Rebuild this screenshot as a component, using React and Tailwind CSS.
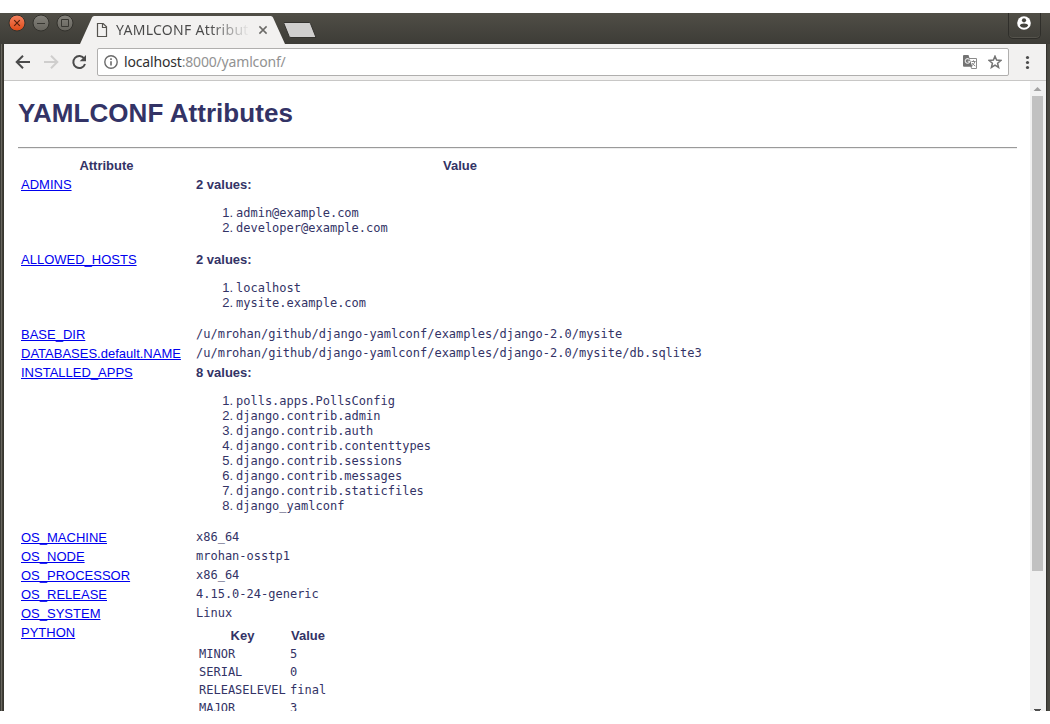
import React from "react";

const mono = "font-['DejaVu_Sans_Mono',monospace] text-[12px]";

const rows = [
  { name: "ADMINS", list: ["admin@example.com", "developer@example.com"] },
  { name: "ALLOWED_HOSTS", list: ["localhost", "mysite.example.com"] },
  { name: "BASE_DIR", value: "/u/mrohan/github/django-yamlconf/examples/django-2.0/mysite" },
  { name: "DATABASES.default.NAME", value: "/u/mrohan/github/django-yamlconf/examples/django-2.0/mysite/db.sqlite3" },
  {
    name: "INSTALLED_APPS",
    list: [
      "polls.apps.PollsConfig",
      "django.contrib.admin",
      "django.contrib.auth",
      "django.contrib.contenttypes",
      "django.contrib.sessions",
      "django.contrib.messages",
      "django.contrib.staticfiles",
      "django_yamlconf",
    ],
  },
  { name: "OS_MACHINE", value: "x86_64" },
  { name: "OS_NODE", value: "mrohan-osstp1" },
  { name: "OS_PROCESSOR", value: "x86_64" },
  { name: "OS_RELEASE", value: "4.15.0-24-generic" },
  { name: "OS_SYSTEM", value: "Linux" },
  {
    name: "PYTHON",
    table: [["MINOR", "5"], ["SERIAL", "0"], ["RELEASELEVEL", "final"], ["MAJOR", "3"]],
  },
];

function WindowButtons() {
  return (
    <svg width="76" height="20" viewBox="0 0 76 20" className="ml-1 shrink-0" fill="none">
      <defs>
        <linearGradient id="close" x1="0" y1="0" x2="0" y2="1">
          <stop offset="0" stopColor="#f58462" />
          <stop offset="1" stopColor="#dd4814" />
        </linearGradient>
        <linearGradient id="plain" x1="0" y1="0" x2="0" y2="1">
          <stop offset="0" stopColor="#85837c" />
          <stop offset="1" stopColor="#65635c" />
        </linearGradient>
      </defs>
      <circle cx="13" cy="10" r="8" fill="url(#close)" stroke="#33322d" />
      <path d="M10.2 7.2l5.6 5.6M15.8 7.2l-5.6 5.6" stroke="#55200c" strokeWidth="1.2" />
      <circle cx="37" cy="10" r="8" fill="url(#plain)" stroke="#33322d" />
      <path d="M33 10.5h8" stroke="#383732" />
      <circle cx="61" cy="10" r="8" fill="url(#plain)" stroke="#33322d" />
      <path d="M57.5 6.5h7v7h-7z" stroke="#383732" />
    </svg>
  );
}

function Tab() {
  return (
    <div className="relative h-[31px] w-[205px] shrink-0">
      <svg width="205" height="31" viewBox="0 0 205 31" className="absolute inset-0">
        <path d="M0 31L12 4.5Q12.6 3 14.2 3H190.8Q192.4 3 193 4.5L205 31z" fill="#f2f1f0" />
        <path d="M17.5 10.5h5.7l3.3 3.3v9.7h-9z M22.5 10.5v4h4" fill="none" stroke="#55534f" strokeWidth="1.2" />
        <path d="M179.4 13.4l7.2 7.2M186.6 13.4l-7.2 7.2" stroke="#6b6a67" strokeWidth="1.5" />
      </svg>
      <div className="relative ml-[36px] mt-[7px] w-[134px] overflow-hidden whitespace-nowrap bg-[linear-gradient(90deg,#484848_70%,#48484800)] bg-clip-text font-['Noto_Sans',sans-serif] text-[14px] leading-[20px] tracking-[0.3px] text-transparent">
        YAMLCONF Attributes
      </div>
    </div>
  );
}

function TitleBar() {
  return (
    <div className="flex h-[31px] shrink-0 bg-linear-to-b from-[#504e46] to-[#3d3c37]">
      <WindowButtons />
      <Tab />
      <svg width="34" height="31" viewBox="0 0 34 31" className="-ml-px shrink-0">
        <path d="M-0.5 9.500H25q1 0 1.500 1L32 24.500H7q-1.300 0-1.800-1z" fill="#d0cfce" stroke="#34332f" />
      </svg>
      <div className="flex-1" />
      <div className="mr-[9px] flex h-[26px] w-[33px] justify-center rounded-b-[5px] border border-t-0 border-[#2f2e2a] pr-[2px] shadow-[inset_0_-1px_0_#55534c]">
        <svg width="14" height="14" viewBox="0 0 14 14" className="mt-[3px]">
          <circle cx="7" cy="7" r="6.800" fill="#fff" />
          <circle cx="7" cy="4.300" r="2.100" fill="#45443e" />
          <path d="M2.800 9.700Q3.300 7.600 7 7.600T11.200 9.700Q9.800 11.800 7 11.800T2.800 9.700z" fill="#45443e" />
        </svg>
      </div>
    </div>
  );
}

function Toolbar() {
  return (
    <div className="flex h-[37px] shrink-0 items-center border-b border-[#c8c7c6] bg-[#f2f1f0]">
      <svg width="93" height="36" viewBox="0 0 93 36" fill="none" className="shrink-0">
        <path d="M26 18H13M19 11.700L12.700 18l6.300 6.300" stroke="#4b4b4b" strokeWidth="2" />
        <path d="M40 18h13M47 11.700L53.300 18L47 24.300" stroke="#cfcecd" strokeWidth="2" />
        <path d="M80.300 14.700A6 6 0 1 0 81 20" stroke="#4b4b4b" strokeWidth="2" />
        <path d="M82 11v6.300h-6.300z" fill="#4b4b4b" />
      </svg>
      <div className="flex h-[28px] flex-1 items-center rounded-[2px] border border-[#b0afae] bg-white">
        <svg width="14" height="14" viewBox="0 0 14 14" className="ml-[6px] shrink-0">
          <circle cx="7" cy="7" r="6.200" fill="none" stroke="#6b6b6b" strokeWidth="1.400" />
          <path d="M7 6.200v4.300M7 3.300v1.700" stroke="#6b6b6b" strokeWidth="1.600" />
        </svg>
        <div className="ml-[6px] whitespace-nowrap font-['Noto_Sans',sans-serif] text-[14px] leading-[20px] tracking-[-0.17px] text-[#929292]">
          <span className="text-[#303030]">localhost</span>:8000/yamlconf/
        </div>
        <div className="flex-1" />
        <svg width="15" height="15" viewBox="0 0 15 15" className="shrink-0">
          <path d="M6 3.500h7.500v10H8.500z" fill="#fff" stroke="#8b8b8b" />
          <path d="M1 0h4.500L9.300 11.800H1q-1 0-1-1V1q0-1 1-1z" fill="#737373" />
          <path d="M6.500 4.700A2.300 2.300 0 1 0 6.800 6.300H4.700" fill="none" stroke="#e5e5e5" strokeWidth="1.100" />
          <path d="M8.500 6.500h4M10.500 5.300v1.200M12 6.500q-.5 2.500-3 4M9.300 8q1 2 3 3" fill="none" stroke="#858585" />
        </svg>
        <svg width="14" height="14" viewBox="0 0 14 14" className="ml-[10px] mr-[6px] shrink-0">
          <path d="M7 1.200L8.600 5.100L12.900 5.500L9.600 8.300L10.600 12.500L7 10.200L3.400 12.500L4.400 8.300L1.100 5.500L5.400 5.100z" fill="none" stroke="#737373" strokeWidth="1.500" />
        </svg>
      </div>
      <svg width="37" height="36" viewBox="0 0 37 36" className="shrink-0" fill="#4b4b4b">
        <circle cx="18.500" cy="13.500" r="1.600" />
        <circle cx="18.500" cy="18.500" r="1.600" />
        <circle cx="18.500" cy="23.500" r="1.600" />
      </svg>
    </div>
  );
}

function Value({ row }) {
  if (row.list) {
    return (
      <div>
        <b className="block">{row.list.length} values:</b>
        <ol className="my-[13px]">
          {row.list.map((item, i) => (
            <li key={item} className="flex h-[15px]">
              <span className="w-[40px] pr-[3px] text-right">{i + 1}.</span>
              <span className={`${mono} leading-[17px]`}>{item}</span>
            </li>
          ))}
        </ol>
      </div>
    );
  }
  if (row.table) {
    return (
      <div className="grid w-max grid-cols-[87px_auto] gap-x-[4px] pl-[3px] pt-[3px]">
        <b className="h-[19px] text-center">Key</b>
        <b className="h-[19px] pl-px">Value</b>
        {row.table.map(([k, v]) => (
          <React.Fragment key={k}>
            <span className={`${mono} h-[18px]`}>{k}</span>
            <span className={`${mono} h-[18px]`}>{v}</span>
          </React.Fragment>
        ))}
      </div>
    );
  }
  return <div className={`${mono} h-[15px]`}>{row.value}</div>;
}

function Page() {
  return (
    <main className="w-[1026px] shrink-0 overflow-hidden pl-[14px] pr-[13px] font-['Liberation_Sans',sans-serif] text-[13px] leading-[15px] text-[#333366]">
      <h1 className="mt-[17px] text-[26px] font-bold leading-[30px] tracking-[0.05px]">YAMLCONF Attributes</h1>
      <hr className="mt-[19px] h-[2px] border-b border-t border-b-[#eeeeee] border-t-[#9a9a9a]" />
      <div className="mt-[9px] flex h-[17px] font-bold">
        <div className="w-[175px] pl-[2px] text-center">Attribute</div>
        <div className="w-[534px] text-center">Value</div>
      </div>
      {rows.map((row) => (
        <div key={row.name} className="grid grid-cols-[175px_1fr] pb-[2px] pl-[3px] pt-[2px]">
          <div>
            <a href="#" className="text-[#0000ee] underline">{row.name}</a>
          </div>
          <Value row={row} />
        </div>
      ))}
    </main>
  );
}

function Scrollbar() {
  return (
    <div className="flex h-full w-[16px] shrink-0 flex-col items-center bg-[#f1f1f1]">
      <svg width="15" height="15" viewBox="0 0 15 15" className="mr-px shrink-0">
        <path d="M7.500 6l4 4h-8z" fill="#a3a3a3" />
      </svg>
      <div className="mr-px h-[475px] w-[11px] shrink-0 bg-[#c1c1c1]" />
      <div className="flex-1" />
      <svg width="7" height="2" viewBox="0 0 7 2" className="mr-px shrink-0">
        <path d="M0 0h7v1H6v1H1V1H0z" fill="#505050" />
      </svg>
    </div>
  );
}

export default function App() {
  return (
    <div className="h-[724px] w-[1050px] overflow-hidden bg-white py-[13px]">
      <div className="flex h-[698px] flex-col overflow-hidden">
        <TitleBar />
        <div className="flex min-h-0 flex-1">
          <div className="w-[4px] shrink-0 bg-[linear-gradient(90deg,#3d3c37_1px,#69675f_1px,#69675f_2px,#45433b_2px,#34322c)]" />
          <div className="flex w-[1042px] shrink-0 flex-col">
            <Toolbar />
            <div className="flex min-h-0 flex-1 bg-white">
              <Page />
              <Scrollbar />
            </div>
          </div>
          <div className="w-[4px] shrink-0 bg-[linear-gradient(90deg,#33322d_1px,#45443e_1px,#4b4a43)]" />
        </div>
      </div>
    </div>
  );
}
